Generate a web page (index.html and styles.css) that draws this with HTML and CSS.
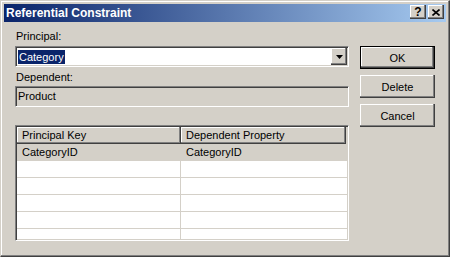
FILE: index.html
```html
<!DOCTYPE html>
<html lang="en">
<head>
    <meta charset="UTF-8">
    <title>Referential Constraint</title>
    <link rel="stylesheet" href="styles.css">
</head>
<body>
    <div class="window">
        <div class="titlebar">
            <span class="title">Referential Constraint</span>
            <div class="caption-buttons">
                <span class="cap-btn help">?</span>
                <span class="cap-btn close">
                    <svg width="8" height="7" viewBox="0 0 8 7">
                        <path d="M0.5 0.5 L7.5 6.5 M7.5 0.5 L0.5 6.5" stroke="#000" stroke-width="1.6" fill="none"/>
                    </svg>
                </span>
            </div>
        </div>
        <div class="content">
            <div class="main">
                <label class="field-label">Principal:</label>
                <div class="combo">
                    <span class="combo-text"><span class="selected">Category</span></span>
                    <span class="drop-btn">
                        <svg width="7" height="4" viewBox="0 0 7 4"><polygon points="0,0 7,0 3.5,4" fill="#000"/></svg>
                    </span>
                </div>
                <label class="field-label dependent">Dependent:</label>
                <div class="textbox">Product</div>
                <div class="grid">
                    <div class="grid-head">
                        <div class="head-cell col1">Principal Key</div>
                        <div class="head-cell col2">Dependent Property</div>
                    </div>
                    <div class="grid-row current">
                        <div class="cell col1">CategoryID</div>
                        <div class="cell col2">CategoryID</div>
                    </div>
                    <div class="grid-row"><div class="cell col1"></div><div class="cell col2"></div></div>
                    <div class="grid-row"><div class="cell col1"></div><div class="cell col2"></div></div>
                    <div class="grid-row"><div class="cell col1"></div><div class="cell col2"></div></div>
                    <div class="grid-row"><div class="cell col1"></div><div class="cell col2"></div></div>
                    <div class="grid-row"><div class="cell col1"></div><div class="cell col2"></div></div>
                </div>
            </div>
            <div class="actions">
                <button class="btn default">OK</button>
                <button class="btn">Delete</button>
                <button class="btn">Cancel</button>
            </div>
        </div>
    </div>
</body>
</html>
```

FILE: styles.css
```css
* {
    box-sizing: border-box;
}
body {
    margin: 0;
    font-family: "Liberation Sans", Arial, sans-serif;
    font-size: 11px;
    color: #000;
}
.window {
    width: 450px;
    height: 257px;
    background-color: #d4d0c8;
    border: 1px solid;
    border-color: #d4d0c8 #404040 #404040 #d4d0c8;
    box-shadow: inset -1px -1px #808080, inset 1px 1px #fff;
    padding: 3px;
    display: flex;
    flex-direction: column;
    overflow: hidden;
}
.titlebar {
    height: 18px;
    flex-shrink: 0;
    background: linear-gradient(to right, #0a246a, #a6caf0);
    display: flex;
    justify-content: space-between;
    align-items: flex-start;
}
.title {
    color: #fff;
    font-weight: bold;
    font-size: 12px;
    line-height: 18px;
    padding-left: 2px;
}
.caption-buttons {
    display: flex;
    gap: 2px;
    margin-top: 1px;
    margin-right: 2px;
}
.cap-btn {
    width: 16px;
    height: 14px;
    background-color: #d4d0c8;
    box-shadow: inset -1px -1px #404040, inset -2px -2px #808080, inset 1px 1px #fff;
    display: flex;
    align-items: center;
    justify-content: center;
}
.cap-btn.help {
    font-weight: bold;
    font-size: 12px;
    line-height: 14px;
    padding-bottom: 1px;
}
.cap-btn svg {
    display: block;
}
.content {
    flex: 1;
    display: flex;
    gap: 11px;
    padding: 8px 11px 0 11px;
}
.main {
    width: 335px;
    display: flex;
    flex-direction: column;
}
.field-label {
    line-height: 13px;
    padding-left: 1px;
    margin-bottom: 3px;
}
.field-label.dependent {
    margin-top: 4px;
    margin-bottom: 2px;
}
.combo,
.textbox,
.grid {
    border: 1px solid;
    border-color: #808080 #fff #fff #808080;
    box-shadow: inset 1px 1px #404040, inset -1px -1px #d4d0c8;
    padding: 1px;
}
.combo {
    height: 21px;
    background-color: #fff;
    display: flex;
}
.combo-text {
    flex: 1;
    display: flex;
    align-items: center;
    padding-left: 1px;
}
.selected {
    background-color: #0a246a;
    color: #fff;
    line-height: 14px;
    padding: 0 1px;
}
.drop-btn {
    width: 16px;
    background-color: #d4d0c8;
    box-shadow: inset -1px -1px #404040, inset -2px -2px #808080, inset 1px 1px #fff;
    display: flex;
    align-items: center;
    justify-content: center;
}
.drop-btn svg {
    display: block;
}
.textbox {
    height: 21px;
    background-color: #d4d0c8;
    line-height: 17px;
    padding-left: 2px;
}
.grid {
    height: 116px;
    margin-top: 18px;
    background-color: #fff;
    overflow: hidden;
}
.grid-head {
    display: flex;
    height: 17px;
    background-color: #d4d0c8;
}
.head-cell {
    height: 17px;
    line-height: 16px;
    padding-left: 5px;
    box-shadow: inset -1px -1px #404040, inset -2px -2px #808080, inset 1px 1px #fff;
}
.col1 {
    width: 164px;
}
.head-cell.col2 {
    width: 165px;
}
.grid-row {
    display: flex;
    height: 17px;
    border-bottom: 1px solid #d4d0c8;
}
.grid-row .col1 {
    border-right: 1px solid #d4d0c8;
}
.grid-row .col2 {
    flex: 1;
}
.grid-row.current {
    background-color: #d4d0c8;
}
.cell {
    line-height: 16px;
    padding-left: 5px;
}
.actions {
    width: 75px;
    display: flex;
    flex-direction: column;
    gap: 6px;
    padding-top: 16px;
}
.btn {
    width: 75px;
    height: 23px;
    padding: 0;
    border: none;
    font-family: inherit;
    font-size: 11px;
    color: #000;
    background-color: #d4d0c8;
    box-shadow: inset -1px -1px #404040, inset -2px -2px #808080, inset 1px 1px #fff;
}
.btn.default {
    box-shadow: inset 0 0 0 1px #000, inset -2px -2px #404040, inset -3px -3px #808080, inset 2px 2px #fff;
}
```
